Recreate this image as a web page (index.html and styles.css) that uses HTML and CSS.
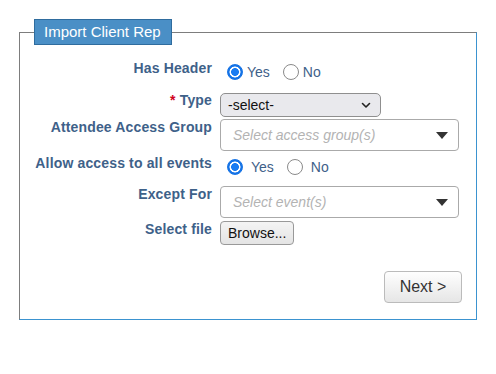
FILE: index.html
```html
<!DOCTYPE html>
<html>
  <head>
    <title>Import Client Rep</title>
    <link rel="stylesheet" href="styles.css">
  </head>
  <body>
    <div class="page">
      <fieldset class="panel">
        <legend class="panel-title">Import Client Rep</legend>

        <div class="form">
          <label class="field-label">Has Header</label>
          <div class="radios">
            <label class="choice"><input type="radio" name="header" checked><span>Yes</span></label>
            <label class="choice"><input type="radio" name="header"><span>No</span></label>
          </div>

          <label class="field-label"><span class="required">*</span> Type</label>
          <div class="control">
            <div class="select">
              <span>-select-</span>
              <svg width="10" height="7" viewBox="0 0 10 7"><path d="M1.5 1.5 L5 5 L8.5 1.5" fill="none" stroke="#222" stroke-width="1.6" stroke-linecap="round" stroke-linejoin="round"/></svg>
            </div>
          </div>

          <label class="field-label">Attendee Access Group</label>
          <div class="control">
            <div class="multi">
              <span class="placeholder">Select access group(s)</span>
              <span class="caret"></span>
            </div>
          </div>

          <label class="field-label">Allow access to all events</label>
          <div class="radios wide">
            <label class="choice"><input type="radio" name="all" checked><span>Yes</span></label>
            <label class="choice"><input type="radio" name="all"><span>No</span></label>
          </div>

          <label class="field-label">Except For</label>
          <div class="control">
            <div class="multi">
              <span class="placeholder">Select event(s)</span>
              <span class="caret"></span>
            </div>
          </div>

          <label class="field-label">Select file</label>
          <div class="control">
            <button class="browse">Browse...</button>
          </div>
        </div>

        <div class="actions">
          <button class="next">Next &gt;</button>
        </div>
      </fieldset>
    </div>
  </body>
</html>
```

FILE: styles.css
```css
* {
  box-sizing: border-box;
}

body {
  margin: 0;
  background: #fff;
  font-family: "Liberation Sans", Arial, sans-serif;
  font-size: 14px;
  color: #3e6189;
}

.page {
  padding: 19px 0 0 19px;
}

.panel {
  width: 458px;
  margin: 0;
  padding: 15px 14px 16px 14px;
  border: 1px solid;
  border-color: #7d7d7d #3b93d0 #3b93d0 #7d7d7d;
}

.panel-title {
  padding: 4px 10px 4px 9px;
  background: #4a8fc6;
  border: 1px solid #2f6c9e;
  color: #fff;
  font-size: 15px;
  line-height: 16px;
}

.form {
  display: grid;
  grid-template-columns: 178px 1fr;
  grid-template-rows: 32px 27px 36px 31px 35px 24px;
  column-gap: 8px;
  align-items: start;
}

.field-label {
  text-align: right;
  font-weight: bold;
  line-height: 16px;
  letter-spacing: 0.15px;
  white-space: nowrap;
}

.required {
  color: #d0021b;
}

.radios {
  display: flex;
  align-items: center;
  padding: 4px 0 0 7px;
  line-height: 16px;
}

.choice {
  display: flex;
  align-items: center;
  gap: 4px;
  margin-right: 13px;
}

.radios.wide .choice {
  gap: 8px;
}

.choice input {
  appearance: none;
  width: 16px;
  height: 16px;
  margin: 0;
  border: 1px solid #8a8a8a;
  border-radius: 50%;
  background: #fff;
}

.choice input:checked {
  border-color: #1573e6;
  background: radial-gradient(circle, #1a7cf2 0 3.6px, #fff 4.2px 5.2px, #1573e6 5.8px);
}

.select {
  display: flex;
  align-items: center;
  justify-content: space-between;
  width: 161px;
  height: 24px;
  margin-top: 1px;
  padding: 0 9px 0 7px;
  background: #e9e9ed;
  border: 1px solid #8f8f8f;
  border-radius: 5px;
  color: #111;
}

.multi {
  display: flex;
  align-items: center;
  justify-content: space-between;
  width: 239px;
  height: 32px;
  padding: 0 10px 0 12px;
  border: 1px solid #aaa;
  border-radius: 4px;
  background: #fff;
}

.placeholder {
  color: #b3b3b3;
  font-style: italic;
}

.caret {
  width: 0;
  height: 0;
  border-left: 6.5px solid transparent;
  border-right: 6.5px solid transparent;
  border-top: 7px solid #333;
}

.browse {
  height: 24px;
  padding: 0 7px;
  font-family: inherit;
  font-size: 14px;
  color: #111;
  background: linear-gradient(#f4f4f4, #e4e4e4);
  border: 1px solid #999;
  border-radius: 4px;
}

.actions {
  display: flex;
  justify-content: flex-end;
  margin-top: 26px;
}

.next {
  width: 78px;
  height: 32px;
  font-family: inherit;
  font-size: 16px;
  color: #333;
  background: linear-gradient(#fefefe, #e6e6e6);
  border: 1px solid #bbb;
  border-radius: 4px;
}
```
